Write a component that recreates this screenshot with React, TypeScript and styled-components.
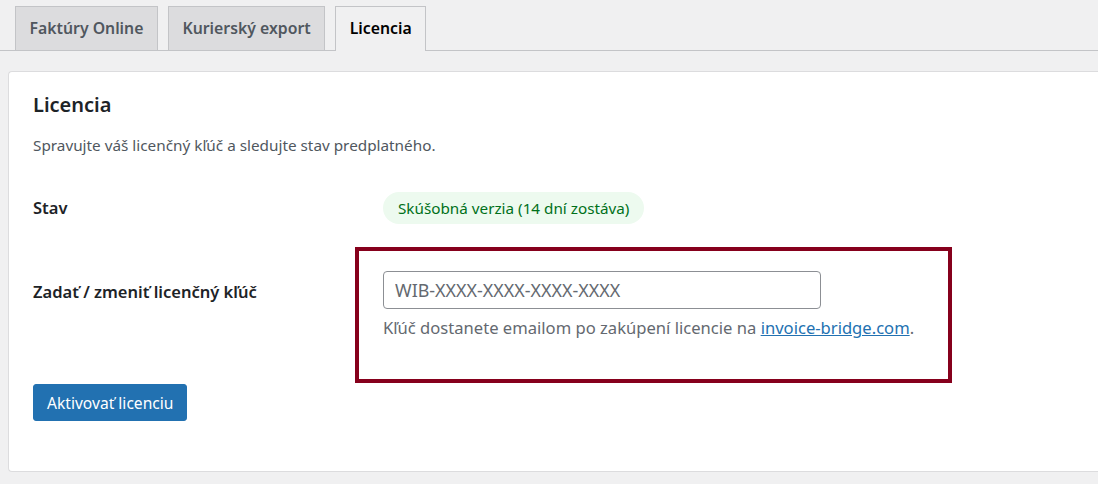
import React from 'react';
import styled, { createGlobalStyle } from 'styled-components';

const GlobalStyle = createGlobalStyle`
  html, body {
    margin: 0;
    padding: 0;
    background: #f0f0f1;
    font-family: 'Noto Sans', 'Open Sans', sans-serif;
    color: #3c434a;
  }
`;

const Page = styled.div`
  padding: 6px 0 0 8px;
  width: 1098px;
  height: 484px;
  box-sizing: border-box;
  overflow: hidden;
`;

const TabBar = styled.nav`
  display: flex;
  gap: 10px;
  border-bottom: 1px solid #c3c4c7;
  margin-left: -8px;
  padding-left: 15px;
`;

const Tab = styled.a<{ $active?: boolean }>`
  display: block;
  padding: 8px 13.5px;
  line-height: 26px;
  font-size: 15.8px;
  font-weight: 600;
  color: ${({ $active }) => ($active ? '#000' : '#50575e')};
  background: ${({ $active }) => ($active ? '#f0f0f1' : '#dcdcde')};
  border: 1px solid #c3c4c7;
  border-bottom: none;
  margin-bottom: ${({ $active }) => ($active ? '-1px' : '0')};
  padding-bottom: ${({ $active }) => ($active ? '10px' : '9px')};
  text-decoration: none;
  cursor: pointer;
`;

const Card = styled.section`
  margin-top: 20px;
  background: #fff;
  border: 1px solid #dcdcde;
  border-right: none;
  border-radius: 4px 0 0 4px;
  padding: 17px 0 50px 24px;
  height: 401px;
  box-sizing: border-box;
`;

const Title = styled.h2`
  margin: 0;
  font-size: 20px;
  line-height: 32px;
  font-weight: 600;
  color: #1d2327;
`;

const Description = styled.p`
  margin: 14px 0 0;
  font-size: 15.3px;
  line-height: 20px;
  color: #50575e;
`;

const Row = styled.div`
  display: flex;
  align-items: center;
`;

const Label = styled.div`
  width: 322px;
  flex-shrink: 0;
  font-size: 16.5px;
  line-height: 22px;
  font-weight: 600;
  color: #1d2327;
`;

const StatusRow = styled(Row)`
  margin-top: 37px;
`;

const Badge = styled.span`
  margin-left: 28px;
  display: inline-block;
  padding: 0 15px;
  height: 32px;
  line-height: 32px;
  border-radius: 16px;
  background: #edfaef;
  color: #00701a;
  font-size: 15.25px;
`;

const KeyRow = styled(Row)`
  margin-top: 23px;
  align-items: flex-start;
`;

const KeyLabel = styled(Label)`
  padding-top: 34px;
`;

const Highlight = styled.div`
  width: 597px;
  height: 136px;
  box-sizing: border-box;
  border: 4px solid #86001c;
  padding: 20px 24px 0;
`;

const KeyInput = styled.input`
  display: block;
  width: 438px;
  height: 38px;
  box-sizing: border-box;
  border: 1px solid #8c8f94;
  border-radius: 4px;
  padding: 0 11px;
  font-family: inherit;
  font-size: 17.9px;
  color: #2c3338;
  background: #fff;

  &::placeholder {
    color: #646970;
  }
`;

const Hint = styled.p`
  margin: 8px 0 0;
  font-size: 16.6px;
  line-height: 22px;
  color: #646970;

  a {
    color: #2271b1;
    text-decoration: underline;
  }
`;

const Button = styled.button`
  display: block;
  margin-top: 1px;
  height: 37px;
  padding: 0 13px;
  background: #2271b1;
  border: 1px solid #2271b1;
  border-radius: 3px;
  color: #fff;
  font-family: inherit;
  font-size: 15.6px;
  cursor: pointer;
`;

const App = () => (
  <>
    <GlobalStyle />
    <Page>
      <TabBar>
        <Tab>Faktúry Online</Tab>
        <Tab>Kurierský export</Tab>
        <Tab $active>Licencia</Tab>
      </TabBar>
      <Card>
        <Title>Licencia</Title>
        <Description>Spravujte váš licenčný kľúč a sledujte stav predplatného.</Description>
        <StatusRow>
          <Label>Stav</Label>
          <Badge>Skúšobná verzia (14 dní zostáva)</Badge>
        </StatusRow>
        <KeyRow>
          <KeyLabel>Zadať / zmeniť licenčný kľúč</KeyLabel>
          <Highlight>
            <KeyInput type="text" placeholder="WIB-XXXX-XXXX-XXXX-XXXX" />
            <Hint>
              Kľúč dostanete emailom po zakúpení licencie na{' '}
              <a href="#">invoice-bridge.com</a>.
            </Hint>
          </Highlight>
        </KeyRow>
        <Button>Aktivovať licenciu</Button>
      </Card>
    </Page>
  </>
);

export default App;
